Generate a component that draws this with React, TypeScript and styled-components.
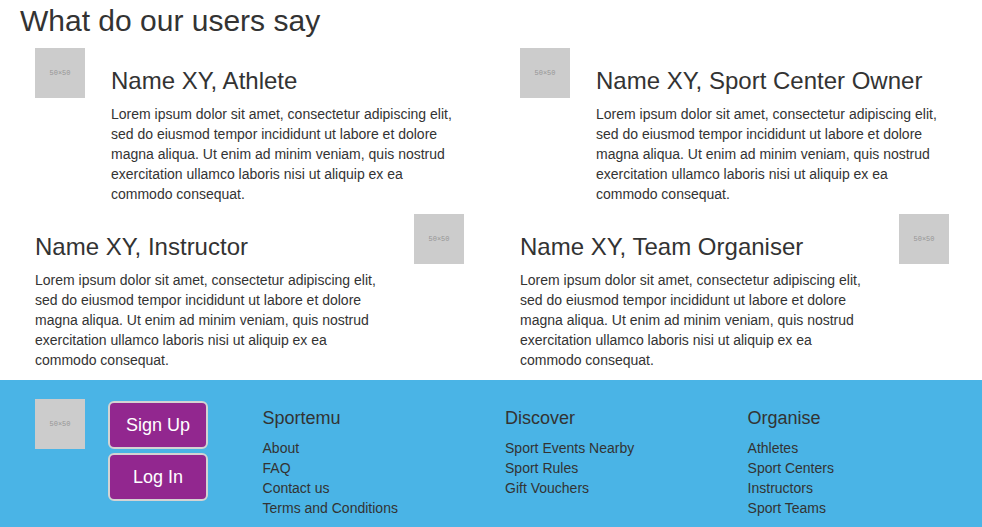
import React from 'react';
import styled, { createGlobalStyle } from 'styled-components';

const GlobalStyle = createGlobalStyle`
  *, *::before, *::after { box-sizing: border-box; }
  body {
    margin: 0;
    background: #ffffff;
    color: #333333;
    font-family: "Liberation Sans", Arial, sans-serif;
    font-size: 14px;
    line-height: 20px;
  }
`;

const Testimonials = styled.main`
  padding: 4px 18px 10px 20px;
`;

const PageTitle = styled.h2`
  margin: 0 0 10px;
  font-size: 30px;
  line-height: 34px;
  font-weight: 400;
`;

const TestimonialGrid = styled.div`
  display: grid;
  grid-template-columns: repeat(2, minmax(0, 1fr));
  gap: 10px 56px;
  padding: 0 15px;
`;

const Testimonial = styled.article<{ $pictureAtEnd: boolean }>`
  display: flex;
  flex-direction: ${(p) => (p.$pictureAtEnd ? 'row-reverse' : 'row')};
  align-items: flex-start;
  gap: 26px;
`;

const Quote = styled.div`
  flex: 1;
  min-width: 0;
  padding-top: 20px;
`;

const Name = styled.h3`
  margin: 0 0 10px;
  font-size: 24px;
  line-height: 26px;
  font-weight: 400;
`;

const Text = styled.p`
  margin: 0;
`;

const Picture = styled.svg`
  display: block;
  flex: none;
  width: 50px;
  height: 50px;
`;

const Footer = styled.footer`
  display: grid;
  grid-template-columns: repeat(3, minmax(0, 30fr)) minmax(0, 29fr);
  padding: 19px 0 9px 20px;
  background: #4ab4e6;
`;

const Account = styled.div`
  display: flex;
  align-items: flex-start;
  gap: 23px;
  padding-left: 15px;
`;

const Buttons = styled.div`
  display: flex;
  flex-direction: column;
  gap: 4px;
  width: 100px;
  padding-top: 2px;
`;

const Button = styled.button`
  height: 48px;
  padding: 0;
  border: 2px solid #d3d3d3;
  border-radius: 6px;
  background: #92278f;
  color: #ffffff;
  font-family: inherit;
  font-size: 18px;
  line-height: 24px;
  cursor: pointer;
`;

const LinkColumn = styled.nav`
  min-width: 0;
  padding-top: 9px;
`;

const ColumnTitle = styled.h4`
  margin: 0 0 10px;
  font-size: 18px;
  line-height: 20px;
  font-weight: 400;
`;

const LinkList = styled.ul`
  margin: 0;
  padding: 0;
  list-style: none;
`;

const FooterLink = styled.a`
  color: inherit;
  text-decoration: none;
`;

const quote =
  'Lorem ipsum dolor sit amet, consectetur adipiscing elit, sed do eiusmod tempor incididunt ut labore et dolore magna aliqua. Ut enim ad minim veniam, quis nostrud exercitation ullamco laboris nisi ut aliquip ex ea commodo consequat.';

const people = [
  { name: 'Name XY, Athlete', pictureAtEnd: false },
  { name: 'Name XY, Sport Center Owner', pictureAtEnd: false },
  { name: 'Name XY, Instructor', pictureAtEnd: true },
  { name: 'Name XY, Team Organiser', pictureAtEnd: true },
];

const columns = [
  { title: 'Sportemu', links: ['About', 'FAQ', 'Contact us', 'Terms and Conditions'] },
  { title: 'Discover', links: ['Sport Events Nearby', 'Sport Rules', 'Gift Vouchers'] },
  { title: 'Organise', links: ['Athletes', 'Sport Centers', 'Instructors', 'Sport Teams'] },
];

function Placeholder() {
  return (
    <Picture viewBox="0 0 50 50" role="img" aria-label="Placeholder picture">
      <rect width="50" height="50" fill="#cccccc" />
      <text
        x="25"
        y="27"
        textAnchor="middle"
        fontFamily="Liberation Mono, Courier New, monospace"
        fontSize="7"
        fill="#969696"
      >
        50×50
      </text>
    </Picture>
  );
}

export default function App() {
  return (
    <>
      <GlobalStyle />
      <Testimonials>
        <PageTitle>What do our users say</PageTitle>
        <TestimonialGrid>
          {people.map((person) => (
            <Testimonial key={person.name} $pictureAtEnd={person.pictureAtEnd}>
              <Placeholder />
              <Quote>
                <Name>{person.name}</Name>
                <Text>{quote}</Text>
              </Quote>
            </Testimonial>
          ))}
        </TestimonialGrid>
      </Testimonials>
      <Footer>
        <Account>
          <Placeholder />
          <Buttons>
            <Button type="button">Sign Up</Button>
            <Button type="button">Log In</Button>
          </Buttons>
        </Account>
        {columns.map((column) => (
          <LinkColumn key={column.title} aria-label={column.title}>
            <ColumnTitle>{column.title}</ColumnTitle>
            <LinkList>
              {column.links.map((link) => (
                <li key={link}>
                  <FooterLink href="#">{link}</FooterLink>
                </li>
              ))}
            </LinkList>
          </LinkColumn>
        ))}
      </Footer>
    </>
  );
}
